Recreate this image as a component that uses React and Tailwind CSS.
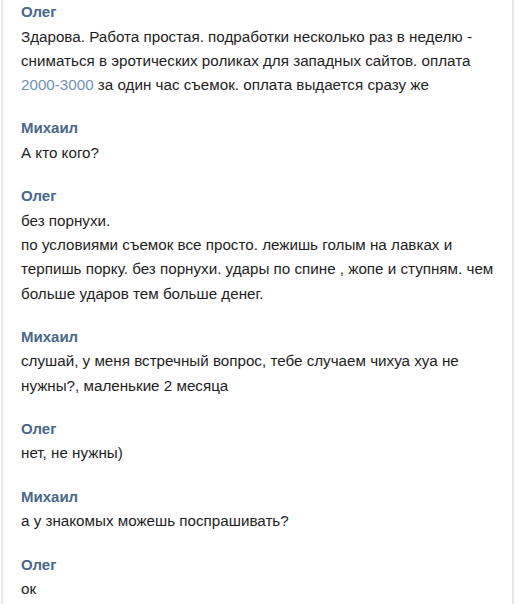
export default function App() {
  const msgs = [
    { name: "Олег", lines: [
      <>Здарова. Работа простая. подработки несколько раз в неделю -</>,
      <>сниматься в эротических роликах для западных сайтов. оплата</>,
      <><span className="text-[#6f92b8]">2000-3000</span> за один час съемок. оплата выдается сразу же</>,
    ]},
    { name: "Михаил", lines: [<>А кто кого?</>] },
    { name: "Олег", lines: [
      <>без порнухи.</>,
      <>по условиями съемок все просто. лежишь голым на лавках и</>,
      <>терпишь порку. без порнухи. удары по спине , жопе и ступням. чем</>,
      <>больше ударов тем больше денег.</>,
    ]},
    { name: "Михаил", lines: [
      <>слушай, у меня встречный вопрос, тебе случаем чихуа хуа не</>,
      <>нужны?, маленькие 2 месяца</>,
    ]},
    { name: "Олег", lines: [<>нет, не нужны)</>] },
    { name: "Михаил", lines: [<>а у знакомых можешь поспрашивать?</>] },
    { name: "Олег", lines: [<>ок</>] },
  ];
  return (
    <div className="w-[516px] h-[604px] bg-white overflow-hidden" style={{ fontFamily: '"Liberation Sans", Arial, sans-serif' }}>
      <div className="ml-[1px] w-[513px] h-[604px] border-x-2 border-[#e6e7ea] overflow-hidden flex flex-col gap-[19px] pl-[18px]">
        {msgs.map((m, i) => (
          <div key={i} className="flex flex-col">
            <div className="text-[15px] leading-[24.5px] font-bold text-[#49688a]">{m.name}</div>
            {m.lines.map((l, j) => (
              <div key={j} className="text-[15.2px] leading-[24.3px] text-[#1e1e1e] whitespace-nowrap">{l}</div>
            ))}
          </div>
        ))}
      </div>
    </div>
  );
}
